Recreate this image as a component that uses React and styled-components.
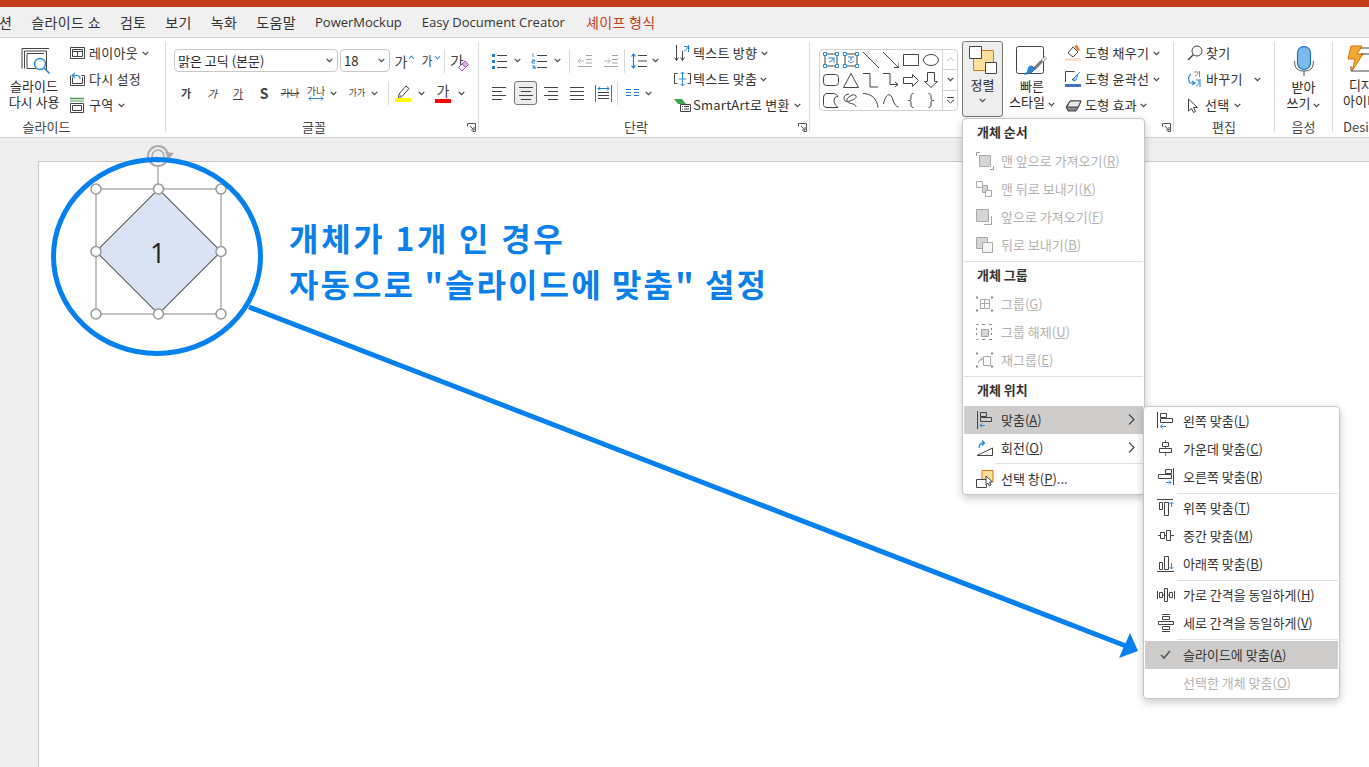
import React from 'react';
import styled, { createGlobalStyle } from 'styled-components';

const Global = createGlobalStyle`
  html, body { margin: 0; padding: 0; background: #efefef; }
  body { width: 1369px; height: 767px; overflow: hidden; font-family: "Noto Sans CJK KR", "Noto Sans", sans-serif; color: #2b2b2b; }
  u { text-underline-offset: 1px; }
`;

const Root = styled.div`position: relative; width: 1369px; height: 767px; overflow: hidden; display: flex; flex-direction: column;`;
const AccentBar = styled.div`height: 7px; background: #c43e1c; flex: none;`;
const TabBar = styled.nav`
  height: 30px; flex: none; background: #f0f0f0; border-bottom: 1px solid #d2d2d2; padding-left: 0;
  display: flex; align-items: center; gap: 19px; white-space: nowrap; overflow: hidden;
`;
const Tab = styled.span`
  color: ${p => (p.$accent ? '#c43e1c' : '#333')};
  font-size: ${p => (p.$latin ? '13px' : '14px')};
  letter-spacing: ${p => (p.$latin ? '0' : '.35px')};
  margin-left: ${p => p.$ml || 0}px;
  font-family: ${p => (p.$latin ? '"Open Sans", sans-serif' : 'inherit')};
`;
const Ribbon = styled.div`
  flex: none; background: #fff; border-bottom: 1px solid #d2d2d2; padding-top: 4px; box-sizing: border-box;
  height: 100px; display: flex; overflow: hidden; font-size: 13px; line-height: 16px;
`;
const Group = styled.section`
  position: relative; width: ${p => p.$w}px; height: 90px; flex: none; box-sizing: border-box;
  border-right: ${p => (p.$last ? 'none' : '1px solid #dcdcdc')};
  display: flex; flex-direction: column;
`;
const GroupBody = styled.div`height: 76px; flex: none; display: flex; padding-left: ${p => p.$pl || 0}px;`;
const GroupLabel = styled.div`
  height: 14px; line-height: 18px; text-align: ${p => (p.$left ? 'left' : 'center')}; font-size: 13px; color: #444; white-space: nowrap;
  padding-right: ${p => p.$pr || 0}px; padding-left: ${p => p.$left || 0}px;
`;
const Launcher = styled.span`position: absolute; right: 2px; bottom: 0; width: 9px; height: 9px; display: flex;`;

const BigButton = styled.div`
  width: ${p => p.$w}px; flex: none; display: flex; flex-direction: column; align-items: center; box-sizing: border-box;
  height: 76px; padding-top: ${p => p.$pt || 3}px; line-height: 16px; text-align: center; white-space: nowrap;
  background: ${p => (p.$on ? '#eeeeee' : 'transparent')};
  border: ${p => (p.$on ? '1px solid #777' : '1px solid transparent')}; border-radius: 3px;
  margin-top: ${p => (p.$on ? '-1px' : '0')}; margin-left: ${p => p.$ml || 0}px;
`;
const BigIcon = styled.span`height: ${p => p.$h || 32}px; display: flex; flex: none;`;
const SmallColumn = styled.div`display: flex; flex-direction: column; gap: 4px; margin-left: ${p => p.$ml || 0}px; flex: none;`;
const SmallRow = styled.div`display: flex; height: 22px; align-items: center; gap: ${p => p.$gap ?? 3}px; white-space: nowrap; color: #333; letter-spacing: .25px;`;
const ChevWrap = styled.span`display: inline-flex; margin-left: ${p => p.$ml || 0}px; margin-top: ${p => p.$mt || 0}px; flex: none;`;
const ToolColumn = styled.div`display: flex; flex-direction: column; gap: 9px; padding-top: 7px; flex: none;`;
const ToolRow = styled.div`display: flex; height: ${p => p.$h || 24}px; align-items: center; padding-left: ${p => p.$pl || 0}px;`;
const Cell = styled.span`
  width: ${p => p.$w}px; height: 24px; flex: none; display: flex; align-items: center; justify-content: center; box-sizing: border-box;
  background: ${p => (p.$on ? '#ededed' : 'transparent')}; border: ${p => (p.$on ? '1px solid #777' : 'none')}; border-radius: 3px;
  margin-left: ${p => p.$ml || 0}px; font-size: ${p => p.$fs || 11}px; font-weight: ${p => (p.$b ? 700 : 400)};
  font-style: ${p => (p.$i ? 'italic' : 'normal')}; text-decoration: ${p => (p.$u ? 'underline' : p.$s ? 'line-through' : 'none')}; color: #444;
`;
const Caret = styled.span`display: flex; align-self: flex-start; margin: 6px 0 0 1px;`;
const GlyphStack = styled.span`
  position: relative; display: flex; flex-direction: column; align-items: center; font-size: ${p => p.$fs || 11}px; line-height: ${p => p.$lh || 11}px; color: #444; white-space: nowrap;
`;
const ColorBar = styled.span`display: block; width: 16px; height: 4px; background: ${p => p.$c}; margin-top: 2px;`;
const EraserMark = styled.span`position: absolute; left: 7px; top: 7px; display: flex;`;
const Divider = styled.span`width: 1px; height: 24px; background: #d8d8d8; flex: none; margin: 0 ${p => p.$mr ?? 4}px 0 ${p => p.$ml ?? 4}px;`;
const Combo = styled.div`
  width: ${p => p.$w}px; height: 23px; box-sizing: border-box; flex: none; margin-left: ${p => p.$ml || 0}px;
  border: 1px solid #c8c8c8; border-radius: 4px; display: flex; align-items: center; justify-content: space-between; padding: 0 4px 0 3px; font-size: 13px;
`;
const Gallery = styled.div`
  width: 139px; height: 62px; box-sizing: border-box; margin-top: 7px; flex: none; border: 1px solid #d2d2d2; border-radius: 4px; display: flex;
`;
const ShapeGrid = styled.div`display: grid; grid-template-columns: repeat(6, 20px); grid-auto-rows: 20px; padding-left: 1px; width: 122px; box-sizing: border-box; flex: none;`;
const ShapeCell = styled.span`display: flex; align-items: center; justify-content: center;`;
const GalleryScroll = styled.div`flex: 1; border-left: 1px solid #d2d2d2; display: flex; flex-direction: column;`;
const ScrollCell = styled.span`flex: 1; display: flex; align-items: center; justify-content: center; & + & { border-top: 1px solid #d2d2d2; }`;

const Workspace = styled.main`flex: 1; position: relative; padding: 23px 0 0 38px; background: #efefef; display: flex; min-height: 0;`;
const Slide = styled.div`flex: 1; background: #fff; border: 1px solid #c8c8c8; border-right: 0; border-bottom: 0;`;
const Overlay = styled.svg`position: absolute; left: 0; top: 0; width: 1369px; height: 629px;`;
const ShapeNumber = styled.span`position: absolute; left: 150px; top: 97px; font-size: 27px; line-height: 36px; font-family: "Open Sans", sans-serif; color: #222;`;
const Callout = styled.div`position: absolute; left: 289px; top: 76px; color: #0b7fea; font-weight: 700; font-size: 32px; line-height: 47px; white-space: nowrap;`;
const CalloutLine = styled.div`letter-spacing: ${p => p.$ls}px; margin-top: ${p => p.$mt || 0}px;`;

const Menu = styled.div`
  position: absolute; box-sizing: border-box; background: #fff; border: 1px solid #c8c6c4; border-radius: 4px; padding: 0 1px;
  box-shadow: 0 3px 9px rgba(0,0,0,.22); left: ${p => p.$x}px; top: ${p => p.$y}px; width: ${p => p.$w}px; height: ${p => p.$h}px;
  font-size: 13px; z-index: 2; display: flex; flex-direction: column;
`;
const MenuHeader = styled.div`height: ${p => p.$h || 27}px; flex: none; padding-left: 13px; line-height: 26px; font-weight: 700; color: #333;`;
const MenuSep = styled.div`height: 1px; background: #e1dfdd; margin: ${p => p.$mt ?? 2}px 0 ${p => p.$mb ?? 0}px ${p => p.$ml || 0}px; flex: none;`;
const MenuItem = styled.div`
  height: 28px; box-sizing: border-box; flex: none; display: flex; align-items: center; gap: ${p => p.$gap || 7}px; padding: 0 8px 1px 12px;
  background: ${p => (p.$on ? '#cfcdcb' : 'transparent')}; color: ${p => (p.$off ? '#b4b2b0' : '#333')}; white-space: nowrap;
`;
const MenuIcon = styled.span`width: 18px; height: 18px; display: flex; flex: none;`;
const MenuArrow = styled.span`margin-left: auto; display: flex;`;

const Ic = ({ w = 16, h = 16, c = '#444', children }) => (
  <svg width={w} height={h} viewBox={`0 0 ${w} ${h}`} fill="none" stroke={c} strokeWidth="1" style={{ display: 'block', flex: 'none' }}>{children}</svg>
);
const Chev = ({ ml, mt }) => (
  <ChevWrap $ml={ml} $mt={mt}><Ic w={7} h={5} c="#444"><path d="M.7.8 3.5 3.6 6.3.8" strokeWidth="1.200" /></Ic></ChevWrap>
);
const BLUE = '#2b88d8';

const LaunchIcon = () => (
  <Launcher><Ic w={9} h={9} c="#555"><path d="M.5 3.500v-3h8v8h-3M3 3l4 4M7 4v3H4" /></Ic></Launcher>
);

const ReuseIcon = () => (
  <Ic w={32} h={30}>
    <path d="M4 2.500h27M4 2.500v20M6.500 5h22v20M6.500 5v17.500M9 7.500h17M9 7.500v15h9" />
    <circle cx="22" cy="18" r="5.500" stroke="#2b88d8" strokeWidth="1.400" />
    <path d="m26 22 5.500 5.500" stroke="#2b88d8" strokeWidth="1.600" />
  </Ic>
);
const LayoutIcon = () => <Ic w={17} h={14}><path d="M1.500 1.500h14v11h-14zM3.500 3.500h10v7h-10zM3.500 5.500h10M8.500 5.500v5" /></Ic>;
const ResetIcon = () => (
  <Ic w={17} h={15}>
    <path d="M1.500 3.500v10h14v-10h-3M3.500 5.500v6h10v-6" />
    <path d="M6 1 3 3.500 6 6M3 3.500h5c2 0 3 1.200 3 3.500" stroke="#2b88d8" strokeWidth="1.200" />
  </Ic>
);
const SectionIcon = () => (
  <Ic w={16} h={16}>
    <path d="M1 1.500h14" stroke="#4f9a4f" strokeWidth="1.500" />
    <path d="M1 4h14" stroke="#4f9a4f" />
    <path d="M1.500 6.500h13v9h-13zM3.500 8.500h9v5h-9z" />
  </Ic>
);
const GrowIcon = ({ up }) => (
  <Ic w={7} h={5} c={BLUE}><path d={up ? 'M1 4 3.500 1 6 4' : 'M1 1 3.500 4 6 1'} strokeWidth="1.100" /></Ic>
);
const EraserIcon = () => (
  <Ic w={12} h={12}>
    <path d="m5 4 3-3 3.500 3.500-3 3z" fill="#d9b3e6" stroke="#9c4fb8" />
    <path d="M1.500 7.500 5 4l3.500 3.500L5 11z" fill="#fff" stroke="#9c4fb8" />
  </Ic>
);
const HighlightIcon = () => (
  <Ic w={16} h={18}>
    <path d="m4 10 7-8 3 2.500-7 8-3.500 1z" />
    <path d="m4 10 3 2.500" stroke="#888" />
    <path d="M0 16h16" stroke="#ffff00" strokeWidth="4" />
  </Ic>
);
const BulletsIcon = () => (
  <Ic w={16} h={16}>
    <path d="M1 1h3v3H1zM1 7h3v3H1zM1 13h3v3H1z" fill="#1e7fd0" stroke="none" />
    <path d="M6 2.500h10M6 8.500h10M6 14.500h10" />
  </Ic>
);
const NumberIcon = () => (
  <Ic w={16} h={16}>
    <path d="M2 .500v3.500M1 7h3v1H1v2h3M1 13h3v3H1m1-1.500h2" stroke="#1e7fd0" strokeWidth=".900" />
    <path d="M6 2.500h10M6 8.500h10M6 14.500h10" />
  </Ic>
);
const IndentIcon = ({ flip }) => (
  <Ic w={15} h={12} c="#a6a6a6">
    <path d="M9 .500h6M9 4.500h6M9 8h6M1 11.500h14" />
    {flip ? <path d="M1 6h6M5 3.500 7.500 6 5 8.500" stroke="#b8b8b8" /> : <path d="M7 6H1M3.500 3.500 1 6l2.500 2.500" stroke="#b8b8b8" />}
  </Ic>
);
const SpacingIcon = () => (
  <Ic w={16} h={16}>
    <path d="M7 2.500h9M7 8h9M7 13.500h9" />
    <path d="M2.500 1v14M.5 3.500l2-2.500 2 2.500M.5 12.500l2 2.500 2-2.500" stroke="#1e7fd0" strokeWidth="1.200" />
  </Ic>
);
const AlignIcon = ({ kind }) => {
  const d = {
    left: 'M0 .500h14M0 4.500h10M0 8.500h14M0 12.500h10',
    center: 'M0 .500h14M2 4.500h10M0 8.500h14M2 12.500h10',
    right: 'M0 .500h14M4 4.500h10M0 8.500h14M4 12.500h10',
    just: 'M0 .500h14M0 4.500h14M0 8.500h14M0 12.500h14',
  }[kind];
  return <Ic w={14} h={13}><path d={d} /></Ic>;
};
const DistribIcon = () => (
  <Ic w={17} h={17}>
    <path d="M.500 0v17M16.500 0v17" stroke="#1e7fd0" />
    <path d="M3 7.500h11M3 10.500h11M3 13.500h11" />
    <path d="M3 3.500h11M5 1.500 3 3.500l2 2M12 1.500l2 2-2 2" stroke="#1e7fd0" />
  </Ic>
);
const ColumnsIcon = () => (
  <Ic w={13} h={8} c="#1e7fd0"><path d="M0 .500h5M8 .500h5M0 3.500h5M8 3.500h5M0 6.500h5M8 6.500h5" /></Ic>
);
const DirectionIcon = () => (
  <Ic w={16} h={19}>
    <path d="M2.500 1v15M.5 13.500l2 3 2-3M8.500 7v9M6.500 13.500l2 3 2-3" />
    <path d="M10 2.500h3.500c0 2-1 3.500-3.500 4.500M14.500 1v7M14.500 4h1.500" stroke="#2b88d8" />
  </Ic>
);
const FitIcon = () => (
  <Ic w={17} h={16}>
    <path d="M3.500 2.500h-3v10h3M13.500 2.500h3v10h-3" />
    <path d="M8.500 1v14M6.500 3l2-2 2 2M6.500 13l2 2 2-2M5 8h7" stroke="#2b88d8" />
  </Ic>
);
const SmartArtIcon = () => (
  <Ic w={17} h={14}>
    <path d="M0 1h8l4 5H4z" fill="#3fa34d" stroke="none" />
    <path d="M6.500 6.500h10v7h-10z" fill="#fff" />
    <path d="M8 8.500h1M10 8.500h5M8 11h1M10 11h5" />
  </Ic>
);
const ArrangeIcon = () => (
  <Ic w={28} h={28}>
    <path d="M4.500 4.500h20v20h-20z" fill="#ffdf9e" stroke="#d97a10" />
    <path d="M.500.500h12v12H.500z" fill="#fff" stroke="#444" />
    <path d="M16.500 16.500h11v11h-11z" fill="#fff" stroke="#444" />
  </Ic>
);
const StyleIcon = () => (
  <Ic w={32} h={31}>
    <rect x=".500" y=".500" width="27" height="27" rx="2" />
    <path d="M30 11 18 23" stroke="#777" strokeWidth="3" />
    <path d="M30 11 26 15" stroke="#e3e3e3" strokeWidth="2" />
    <path d="M10 28c3 0 7-2 9-5l-3-3c-3 0-4 2-4 4 0 2-2 3-4 4h2z" fill="#2b88d8" stroke="#1e6fb5" />
  </Ic>
);
const FillIcon = () => (
  <Ic w={16} h={16}>
    <path d="M3 8 8 2l5 5-5 5z" />
    <path d="M9 1l4 5 2-1-3-5z" fill="#d97a3a" stroke="none" />
    <path d="M0 14.500h16" stroke="#fbe0cf" strokeWidth="3" />
  </Ic>
);
const LineIcon = () => (
  <Ic w={16} h={16}>
    <path d="M.500 11V.500h9M15 1l-8 8" />
    <path d="m13 3 2-2-5 5-2 4 3-1z" fill="#fff" stroke="#2b88d8" />
    <path d="M0 14.500h16" stroke="#4472c4" strokeWidth="3" />
  </Ic>
);
const EffectIcon = () => (
  <Ic w={17} h={14}>
    <path d="M1 9 5 3h11l-3 7-2 3H3z" fill="#888" />
    <path d="M5 3h11l-3 6H2z" fill="#e9e9e9" />
  </Ic>
);
const FindIcon = () => (
  <Ic w={16} h={16}><circle cx="10" cy="6" r="5" /><path d="M6.500 9.500 1 15" strokeWidth="1.400" /></Ic>
);
const ReplaceIcon = () => (
  <Ic w={17} h={17}>
    <path d="M7 1h4c0 2-1 3-3 4M12.500 0v6" stroke="#888" />
    <path d="M9 9h3v2c0 2-1 3-3 4M13 8v8" stroke="#2b88d8" />
    <path d="M4 3C1 5 1 9 3 12h5M5 10l3 2-3 2" stroke="#2b88d8" strokeWidth="1.200" />
  </Ic>
);
const CursorIcon = () => (
  <Ic w={12} h={15}><path d="M1.500 1v12l3-2.500 2 4 2-1-2-4h4z" /></Ic>
);
const MicIcon = () => (
  <Ic w={20} h={31}>
    <rect x="3.500" y=".500" width="13" height="23" rx="6.500" fill="#7db8ec" stroke="#1e73be" strokeWidth="1.200" />
    <path d="M.5 15c0 8 4 10 9.500 10s9.500-2 9.500-10M10 25v5" stroke="#555" />
  </Ic>
);
const IdeaIcon = () => (
  <Ic w={40} h={28}>
    <path d="M4 1h11L10 9h6L5 26l3-12H1z" fill="#f4a836" stroke="#d9730d" />
    <path d="M14 3h15M14 9h15M4 21v5h25V11" />
  </Ic>
);
const WidthArrow = () => (
  <Ic w={16} h={5} c={BLUE}><path d="M1 2.500h14M3 .5l-2 2 2 2M13 .5l2 2-2 2" /></Ic>
);

const shapes = [
  <Ic w={16} h={16} c={BLUE} key="a"><path d="M2 2h12v12H2z" stroke="#444" /><path d="M.5.500h3v3h-3zM12.500.500h3v3h-3zM.5 12.500h3v3h-3zM12.500 12.500h3v3h-3z" fill="#fff" /><path d="M5 6h5c0 2-1 3-4 4M11 5v6" /></Ic>,
  <Ic w={16} h={16} c={BLUE} key="b"><path d="M2 2h12v12H2z" stroke="#444" /><path d="M.5.500h3v3h-3zM12.500.500h3v3h-3zM.5 12.500h3v3h-3zM12.500 12.500h3v3h-3z" fill="#fff" /><path d="M5 5h6M8 5v4M5 9l3 2 3-2" /></Ic>,
  <Ic w={16} h={16} key="c"><path d="m0 0 16 16" /></Ic>,
  <Ic w={16} h={16} key="d"><path d="m0 0 16 16M11 15.500h5v-5" /></Ic>,
  <Ic w={16} h={12} key="e"><path d="M.5.500h15v11H.5z" /></Ic>,
  <Ic w={16} h={12} key="f"><ellipse cx="8" cy="6" rx="7.500" ry="5.500" /></Ic>,
  <Ic w={16} h={12} key="g"><rect x=".5" y=".5" width="15" height="11" rx="3" /></Ic>,
  <Ic w={16} h={15} key="h"><path d="M8 .5 15.500 14.500H.500z" /></Ic>,
  <Ic w={16} h={15} key="i"><path d="M0 .500h7v13.500h8" /></Ic>,
  <Ic w={16} h={15} key="j"><path d="M0 .500h7v11h8M12 9l3 2.500-3 2.500" /></Ic>,
  <Ic w={16} h={13} key="k"><path d="M.5 3.500h9V.500l6 6-6 6v-3h-9z" /></Ic>,
  <Ic w={14} h={16} key="l"><path d="M3.500.5h7v9h3l-6.500 6-6.500-6h3z" /></Ic>,
  <Ic w={16} h={15} key="m"><path d="M4 .500h5c3 0 6 1.500 6 3-3 0-4 2-4 4 0 3 2 5 4 7H4c-2 0-3.500-1-3.500-3V5C.5 2 2 .500 4 .500z" /></Ic>,
  <Ic w={16} h={15} key="n"><path d="M6 1c-3 0-5 2-5 4 0 4 3 4 6 3 3-1 7-3 6-5-1-3-7 0-9 3-1 4 3 4 6 5 3 1 3 3 3 3" /></Ic>,
  <Ic w={16} h={15} key="o"><path d="M0 .500c8 0 14 5 15 14" /></Ic>,
  <Ic w={16} h={15} key="p"><path d="M.5 11C2 3 5 1 7 2c3 1 3 11 8.500 12" /></Ic>,
  <Ic w={8} h={15} key="q"><path d="M6.500.500C4 .5 4 2 4 4v2c0 1-1 1.500-2.500 1.500C3 7.500 4 8 4 9v2c0 2 0 3.500 2.500 3.500" /></Ic>,
  <Ic w={8} h={15} key="r"><path d="M1.500.500C4 .5 4 2 4 4v2c0 1 1 1.500 2.500 1.500C5 7.500 4 8 4 9v2c0 2 0 3.500-2.500 3.500" /></Ic>,
];

const G = '#a8a8a8';
const mi = {
  front: <Ic w={18} h={18} c={G}><path d="M.5 4V.5H4M14 17.500h3.500V14" stroke="#999" /><path d="M3.500 3.500h11v11h-11z" fill="#d6d6d6" /></Ic>,
  back: <Ic w={18} h={18} c={G}><path d="M.5 1.500h6v6h-6zM9.500 10.500h6v6h-6z" /><path d="M6.500 5.500h5v5h-2v2h-3z" fill="#d6d6d6" /></Ic>,
  fwd: <Ic w={18} h={18} c={G}><path d="M.5 1.500h12v12H.5z" fill="#d6d6d6" /><path d="M15.500 8v8.500H8" /></Ic>,
  bwd: <Ic w={18} h={18} c={G}><path d="M.5 1.500h11v11H.5z" fill="#d6d6d6" /><path d="M6.500 6.500h10v10h-10z" fill="#f4f4f4" /></Ic>,
  group: <Ic w={18} h={18} c={G}><path d="M1 1.500v2M16 1.500v2M1 14.500v2M16 14.500v2" strokeWidth="2" stroke="#888" /><path d="M4.500 4.500h9v9h-9zM4.500 8.500h9M8.500 4.500v9" /></Ic>,
  ungroup: <Ic w={18} h={18} c={G}><path d="M.5 1.500h2M6 1.500h3M13 1.500h3M.5 16.500h2M6 16.500h3M13 16.500h3M.5 5v2M.5 10v2M15.500 5v2M15.500 10v2" stroke="#888" /><path d="M5.500 6.500h7v7h-7z" fill="#d6d6d6" /></Ic>,
  regroup: <Ic w={18} h={18} c={G}><path d="M1 1.500v2M16 1.500v2M1 14.500v2M16 14.500v2" strokeWidth="2" stroke="#888" /><path d="M7.500 5.500h7v9h-7zM2.500 12c0-3 2-4 4-4M4.500 6l2 2-2 2" /></Ic>,
  align: <Ic w={18} h={18}><path d="M1.500 0v18M4.500 1.500h6v4h-6zM4.500 6.500h11v4h-11z" /><path d="M9 14.500H4M6 12.500l-2 2 2 2" stroke={BLUE} /></Ic>,
  rotate: <Ic w={18} h={18}><path d="M1 16.500h15.500V9z" /><path d="M3 9c0-3 2-5 5-5M6 1.500 8.500 4 6 6.500" stroke={BLUE} strokeWidth="1.300" /></Ic>,
  pane: <Ic w={18} h={18}><path d="M6 .500h11v11H6z" fill="#ffdf9e" stroke="#d97a10" /><path d="M.5 9.500h10v8H.5z" fill="#fff" /><path d="M10 6v9l2-2 1.500 3 1.500-1-1.500-3h3z" fill="#fff" /></Ic>,
  left: <Ic w={18} h={18}><path d="M.5 0v16M3.500 1.500h6v4h-6zM3.500 6.500h12v4h-12z" /><path d="M9 14.500H3.500M5.500 12.500l-2 2 2 2" stroke={BLUE} /></Ic>,
  center: <Ic w={18} h={18}><path d="M8.500 0v2M8.500 7v1M8.500 13v3" stroke={BLUE} /><path d="M5.500 2.500h6v4h-6zM2.500 8.500h12v4h-12z" /></Ic>,
  right: <Ic w={18} h={18}><path d="M16.500 0v17M8.500 1.500h6v4h-6zM1.500 6.500h13v4h-13z" /><path d="M9 14.500h5M12 12.500l2 2-2 2" stroke={BLUE} /></Ic>,
  top: <Ic w={18} h={18}><path d="M0 .500h16M2.500 3.500h3v7h-3zM7.500 3.500h4v13h-4z" /><path d="M14.500 8V3.500M12.500 5l2-2 2 2" stroke={BLUE} /></Ic>,
  middle: <Ic w={18} h={18}><path d="M1 8.500h2M8 8.500h1M14 8.500h3" /><path d="M3.500 5.500h4v6h-4zM9.500 3.500h4v10h-4z" /></Ic>,
  bottom: <Ic w={18} h={18}><path d="M0 16.500h17M2.500 7.500h3v7h-3zM7.500 1.500h4v13h-4z" /><path d="M14.500 8v6M12.500 12l2 2 2-2" stroke={BLUE} /></Ic>,
  hdist: <Ic w={18} h={18}><path d="M.5 5v8M17.500 5v8M2.500 6.500h3v5h-3zM7.500 2.500h3v13h-3zM12.500 6.500h3v5h-3zM5.500 9h2M10.500 9h2" /></Ic>,
  vdist: <Ic w={18} h={18}><path d="M5 .5h8M5 17.500h8M5.500 2.500h7v3h-7zM1.500 7.500h15v3h-15zM5.500 12.500h7v3h-7z" /></Ic>,
  check: <Ic w={18} h={18} c="#555"><path d="m4 9 3 3 6-7" strokeWidth="1.600" /></Ic>,
};

const Arrow = () => (
  <MenuArrow><Ic w={7} h={11} c="#444"><path d="m1 .500 5 5-5 5" strokeWidth="1.100" /></Ic></MenuArrow>
);

const L = ({ t, k, s = '' }) => <span>{t}(<u>{k}</u>){s}</span>;

const Entry = ({ icon, t, k, s, off, on, arrow, gap }) => (
  <MenuItem $off={off} $on={on} $gap={gap}>
    <MenuIcon>{icon}</MenuIcon>
    <L t={t} k={k} s={s} />
    {arrow && <Arrow />}
  </MenuItem>
);

const Handle = ({ x, y }) => <circle cx={x} cy={y} r="5" fill="#fff" stroke="#999" strokeWidth="1.500" />;

export default function App() {
  return (
    <Root>
      <Global />
      <AccentBar />
      <TabBar>
        <Tab $ml={-1}>션</Tab><Tab>슬라이드 쇼</Tab><Tab>검토</Tab><Tab>보기</Tab><Tab>녹화</Tab><Tab>도움말</Tab>
        <Tab $latin>PowerMockup</Tab><Tab $latin $ml={1}>Easy Document Creator</Tab><Tab $accent $ml={2}>셰이프 형식</Tab>
      </TabBar>
      <Ribbon>
        <Group $w={166}>
          <GroupBody $pl={8}>
            <BigButton $w={52} $pt={3}>
              <BigIcon><ReuseIcon /></BigIcon>
              슬라이드<br />다시 사용
            </BigButton>
            <SmallColumn $ml={9}>
              <SmallRow><LayoutIcon />레이아웃<Chev ml={1} /></SmallRow>
              <SmallRow><ResetIcon />다시 설정</SmallRow>
              <SmallRow $gap={4}><SectionIcon />구역<Chev ml={1} /></SmallRow>
            </SmallColumn>
          </GroupBody>
          <GroupLabel $pr={72}>슬라이드</GroupLabel>
        </Group>
        <Group $w={313}>
          <GroupBody>
            <ToolColumn>
              <ToolRow $pl={8} $h={23}>
                <Combo $w={164}>맑은 고딕 (본문)<Chev /></Combo>
                <Combo $w={50} $ml={2}>18<Chev /></Combo>
                <Cell $w={22} $ml={4} $fs={14}>가<Caret><GrowIcon up /></Caret></Cell>
                <Cell $w={22} $ml={4} $fs={12}>가<Caret><GrowIcon /></Caret></Cell>
                <Divider $ml={2} $mr={1} />
                <Cell $w={22}>
                  <GlyphStack $fs={15} $lh={15}>가<EraserMark><EraserIcon /></EraserMark></GlyphStack>
                </Cell>
              </ToolRow>
              <ToolRow $pl={7}>
                <Cell $w={26} $b>가</Cell>
                <Cell $w={26} $i>가</Cell>
                <Cell $w={26} $u>가</Cell>
                <Cell $w={26} $b $fs={14}>S</Cell>
                <Cell $w={26} $s $fs={10}>가나</Cell>
                <Cell $w={26}><GlyphStack $fs={10} $lh={10}>가나<WidthArrow /></GlyphStack></Cell>
                <Chev ml={1} />
                <Cell $w={28} $ml={6} $fs={9}>가가</Cell>
                <Chev ml={0} />
                <Divider $ml={10} $mr={1} />
                <Cell $w={18} $ml={4}><HighlightIcon /></Cell>
                <Chev ml={6} />
                <Cell $w={18} $ml={9}><GlyphStack $fs={14} $lh={13}>가<ColorBar $c="#ff0000" /></GlyphStack></Cell>
                <Chev ml={6} />
              </ToolRow>
            </ToolColumn>
          </GroupBody>
          <GroupLabel $pr={16}>글꼴</GroupLabel>
          <LaunchIcon />
        </Group>
        <Group $w={331}>
          <GroupBody>
            <ToolColumn>
              <ToolRow $pl={11} $h={23}>
                <Cell $w={18}><BulletsIcon /></Cell>
                <Chev ml={6} />
                <Cell $w={18} $ml={9}><NumberIcon /></Cell>
                <Chev ml={6} />
                <Divider $ml={8} $mr={6} />
                <Cell $w={16}><IndentIcon /></Cell>
                <Cell $w={16} $ml={10}><IndentIcon flip /></Cell>
                <Divider $ml={6} $mr={6} />
                <Cell $w={16}><SpacingIcon /></Cell>
                <Chev ml={5} />
              </ToolRow>
              <ToolRow $pl={13}>
                <Cell $w={14}><AlignIcon kind="left" /></Cell>
                <Cell $w={23} $ml={8} $on><AlignIcon kind="center" /></Cell>
                <Cell $w={14} $ml={7}><AlignIcon kind="right" /></Cell>
                <Cell $w={14} $ml={12}><AlignIcon kind="just" /></Cell>
                <Cell $w={17} $ml={11}><DistribIcon /></Cell>
                <Divider $ml={5} $mr={5} />
                <Cell $w={13} $ml={3}><ColumnsIcon /></Cell>
                <Chev ml={6} />
              </ToolRow>
            </ToolColumn>
            <SmallColumn $ml={15}>
              <SmallRow><DirectionIcon />텍스트 방향<Chev ml={1} /></SmallRow>
              <SmallRow $gap={2}><FitIcon />텍스트 맞춤<Chev ml={1} /></SmallRow>
              <SmallRow $gap={2}><SmartArtIcon />SmartArt로 변환<Chev ml={2} /></SmallRow>
            </SmallColumn>
          </GroupBody>
          <GroupLabel $pr={16}>단락</GroupLabel>
          <LaunchIcon />
        </Group>
        <Group $w={364}>
          <GroupBody $pl={9}>
            <Gallery>
              <ShapeGrid>{shapes.map((s, i) => <ShapeCell key={i}>{s}</ShapeCell>)}</ShapeGrid>
              <GalleryScroll>
                <ScrollCell><Ic w={9} h={5} c="#bbb"><path d="m1 4 3.500-3L8 4" /></Ic></ScrollCell>
                <ScrollCell><Chev /></ScrollCell>
                <ScrollCell><Ic w={9} h={7} c="#444"><path d="M1 .500h7M1 3l3.500 3L8 3" /></Ic></ScrollCell>
              </GalleryScroll>
            </Gallery>
            <BigButton $w={41} $on $pt={4} $ml={4}>
              <BigIcon $h={31}><ArrangeIcon /></BigIcon>
              정렬
              <Chev mt={5} />
            </BigButton>
            <BigButton $w={52} $pt={3} $ml={3}>
              <BigIcon><StyleIcon /></BigIcon>
              빠른<br /><span>스타일<Chev ml={3} /></span>
            </BigButton>
            <SmallColumn $ml={7}>
              <SmallRow $gap={4}><FillIcon />도형 채우기<Chev /></SmallRow>
              <SmallRow $gap={4}><LineIcon />도형 윤곽선<Chev /></SmallRow>
              <SmallRow $gap={3}><EffectIcon />도형 효과<Chev /></SmallRow>
            </SmallColumn>
          </GroupBody>
          <GroupLabel />
          <LaunchIcon />
        </Group>
        <Group $w={101}>
          <GroupBody $pl={13}>
            <SmallColumn>
              <SmallRow><FindIcon />찾기</SmallRow>
              <SmallRow $gap={2}><ReplaceIcon />바꾸기<Chev ml={9} /></SmallRow>
              <SmallRow $gap={6}><CursorIcon />선택<Chev ml={-1} /></SmallRow>
            </SmallColumn>
          </GroupBody>
          <GroupLabel>편집</GroupLabel>
        </Group>
        <Group $w={58}>
          <GroupBody>
            <BigButton $w={57} $pt={3}>
              <BigIcon $h={33}><MicIcon /></BigIcon>
              받아<br /><span>쓰기<Chev ml={3} /></span>
            </BigButton>
          </GroupBody>
          <GroupLabel>음성</GroupLabel>
        </Group>
        <Group $w={36} $last>
          <GroupBody>
            <BigButton $w={66} $pt={2} $ml={1}>
              <BigIcon><IdeaIcon /></BigIcon>
              디자인<br />아이디어
            </BigButton>
          </GroupBody>
          <GroupLabel $left={10}>Designer</GroupLabel>
        </Group>
      </Ribbon>
      <Workspace>
        <Slide />
        <Overlay viewBox="0 0 1369 629">
          <path d="M158 51V28" stroke="#999" strokeWidth="1.200" />
          <circle cx="158" cy="18" r="10" fill="none" stroke="#aaa" strokeWidth="2" />
          <circle cx="158" cy="18" r="6" fill="none" stroke="#aaa" strokeWidth="1.500" />
          <path d="m165 14 9 1-5 6" fill="#aaa" stroke="none" />
          <rect x="96" y="51" width="125" height="125" fill="none" stroke="#999" strokeWidth="1.200" />
          <path d="M158.500 51 221 113.500 158.500 176 96 113.500z" fill="#dae3f3" stroke="#111" strokeWidth="1" />
          <Handle x={96} y={51} /><Handle x={158.500} y={51} /><Handle x={221} y={51} />
          <Handle x={96} y={113.500} /><Handle x={221} y={113.500} />
          <Handle x={96} y={176} /><Handle x={158.500} y={176} /><Handle x={221} y={176} />
          <ellipse cx="157" cy="118.500" rx="103.500" ry="97" fill="none" stroke="#0480ef" strokeWidth="5" />
          <path d="M249 169 1126 508" stroke="#0480ef" strokeWidth="5" fill="none" />
          <path d="M1138 513 1119 520 1130 495z" fill="#0480ef" stroke="none" />
        </Overlay>
        <ShapeNumber>1</ShapeNumber>
        <Callout>
          <CalloutLine $ls={2.700}>개체가 1개 인 경우</CalloutLine>
          <CalloutLine $ls={2.100} $mt={-1}>자동으로 "슬라이드에 맞춤" 설정</CalloutLine>
        </Callout>
      </Workspace>
      <Menu $x={962} $y={118} $w={183} $h={377}>
        <MenuHeader $h={28}>개체 순서</MenuHeader>
        <Entry off icon={mi.front} t="맨 앞으로 가져오기" k="R" />
        <Entry off icon={mi.back} t="맨 뒤로 보내기" k="K" />
        <Entry off icon={mi.fwd} t="앞으로 가져오기" k="F" />
        <Entry off icon={mi.bwd} t="뒤로 보내기" k="B" />
        <MenuSep />
        <MenuHeader $h={28}>개체 그룹</MenuHeader>
        <Entry off icon={mi.group} t="그룹" k="G" />
        <Entry off icon={mi.ungroup} t="그룹 해제" k="U" />
        <Entry off icon={mi.regroup} t="재그룹" k="E" />
        <MenuSep />
        <MenuHeader $h={29}>개체 위치</MenuHeader>
        <Entry on arrow icon={mi.align} t="맞춤" k="A" />
        <Entry arrow icon={mi.rotate} t="회전" k="O" />
        <MenuSep $ml={32} $mt={1} $mb={1} />
        <Entry icon={mi.pane} t="선택 창" k="P" s="..." />
      </Menu>
      <Menu $x={1143} $y={406} $w={197} $h={293}>
        <Entry gap={8} icon={mi.left} t="왼쪽 맞춤" k="L" />
        <Entry gap={8} icon={mi.center} t="가운데 맞춤" k="C" />
        <Entry gap={8} icon={mi.right} t="오른쪽 맞춤" k="R" />
        <MenuSep $ml={32} />
        <Entry gap={8} icon={mi.top} t="위쪽 맞춤" k="T" />
        <Entry gap={8} icon={mi.middle} t="중간 맞춤" k="M" />
        <Entry gap={8} icon={mi.bottom} t="아래쪽 맞춤" k="B" />
        <MenuSep $ml={32} />
        <Entry gap={8} icon={mi.hdist} t="가로 간격을 동일하게" k="H" />
        <Entry gap={8} icon={mi.vdist} t="세로 간격을 동일하게" k="V" />
        <MenuSep $ml={32} $mb={1} />
        <Entry gap={8} on icon={mi.check} t="슬라이드에 맞춤" k="A" />
        <Entry gap={8} off icon={null} t="선택한 개체 맞춤" k="O" />
      </Menu>
    </Root>
  );
}
